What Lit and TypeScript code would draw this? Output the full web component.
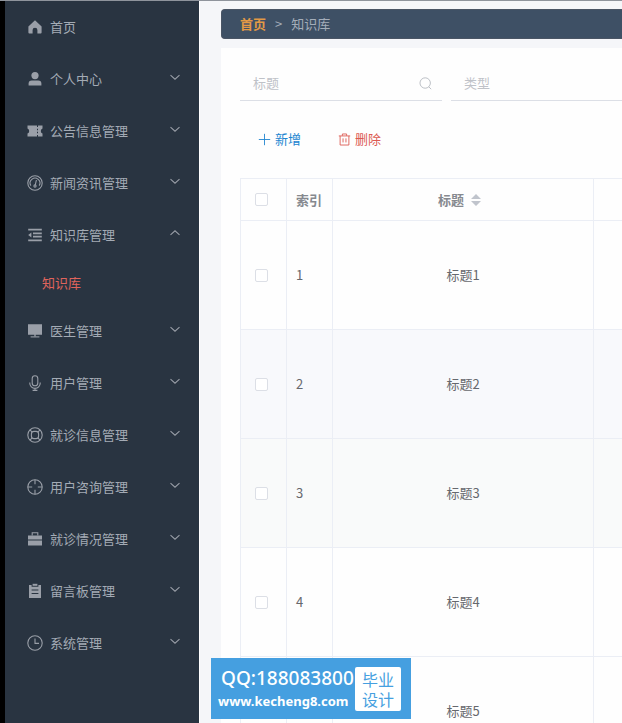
import { LitElement, html, css, svg } from "lit";
import { customElement, state } from "lit/decorators.js";

type Entry = { icon: string; label: string; children?: string[]; leaf?: boolean };

const menu: Entry[] = [
  { icon: "home", label: "首页", leaf: true },
  { icon: "user", label: "个人中心" },
  { icon: "ticket", label: "公告信息管理" },
  { icon: "gauge", label: "新闻资讯管理" },
  { icon: "fold", label: "知识库管理", children: ["知识库"] },
  { icon: "monitor", label: "医生管理" },
  { icon: "mic", label: "用户管理" },
  { icon: "help", label: "就诊信息管理" },
  { icon: "aim", label: "用户咨询管理" },
  { icon: "case", label: "就诊情况管理" },
  { icon: "order", label: "留言板管理" },
  { icon: "time", label: "系统管理" },
];

const icons: Record<string, unknown> = {
  home: svg`<path class="fill" d="M8 1.3 14.6 7.6V13.6Q14.6 14.6 13.6 14.6H10.4V11Q10.4 8.8 8 8.8T5.6 11V14.6H2.4Q1.4 14.6 1.4 13.6V7.6Z"/>`,
  user: svg`<circle class="fill" cx="8" cy="4.6" r="3.6"/><path class="fill" d="M1.6 14.6V12.6Q1.6 9.4 4.8 9.4H11.2Q14.4 9.4 14.4 12.6V14.6Z"/>`,
  ticket: svg`<path class="fill" d="M.5 2.6H10V4H11V2.6H15.5V5.4Q13.8 6 13.8 8T15.5 10.6V13.4H11V12H10V13.4H.5V10.6Q2.2 10 2.2 8T.5 5.4ZM10 5.8V7.3H11V5.8ZM10 8.8V10.3H11V8.8Z" fill-rule="evenodd"/>`,
  gauge: svg`<circle cx="8" cy="8" r="7.2"/><path d="M3.8 10.6A4.9 4.9 0 1 1 12.2 10.6M9.4 5 8.3 9.8"/><circle cx="8" cy="11" r="1.1"/>`,
  fold: svg`<path class="bold" d="M1.2 2.7H14.8M6 6.3H14.8M6 9.7H14.8M1.2 13.3H14.8"/><path class="fill" d="M1.2 8 4.4 5.6V10.4Z"/>`,
  monitor: svg`<path class="fill" d="M1 1.2H15V11.8H1ZM7.3 11.8H8.7V13.4H7.3Z"/><path d="M3.6 13.9H12.4"/>`,
  mic: svg`<rect x="5.2" y=".8" width="5.6" height="10" rx="2.8"/><path d="M2.8 7.4V8.2A5.2 5.2 0 0 0 13.2 8.2V7.4M8 13.4V15.4M5.6 15.4H10.4"/>`,
  help: svg`<circle cx="8" cy="8" r="7.2"/><rect x="4.4" y="4.4" width="7.2" height="7.2" rx="2.6"/><path d="M2.9 2.9 5.2 5.2M13.1 2.9 10.8 5.2M2.9 13.1 5.2 10.8M13.1 13.1 10.8 10.8"/>`,
  aim: svg`<circle cx="8" cy="8" r="7.2"/><path d="M8 .8V5.2M8 10.8V15.2M.8 8H5.2M10.8 8H15.2"/>`,
  case: svg`<path class="fill" d="M1 4.4H15V8.6H1ZM1 9.6H15V14.4H1Z"/><path d="M5.2 4.4V1.8H10.8V4.4"/>`,
  order: svg`<path class="fill" fill-rule="evenodd" d="M2 2H4.6V3.8H11.4V2H14V15H2ZM4.6 6.6V7.6H11.4V6.6ZM4.6 10V11H11.4V10Z"/><path class="fill" d="M5.6 .8H10.4V2.8H5.6Z"/>`,
  time: svg`<circle cx="8" cy="8" r="7.2"/><path d="M8 3.6V8.4H12"/>`,
  down: svg`<path d="M2 5.4 8 11 14 5.4"/>`,
  up: svg`<path d="M2 10.6 8 5 14 10.6"/>`,
  search: svg`<circle cx="7.6" cy="7.4" r="6.4"/><path d="M12 12 15 15"/>`,
  plus: svg`<path d="M8 1V15M1 8H15"/>`,
  trash: svg`<path d="M1 3.6H15M5.4 3.4V1.2H10.6V3.4M2.6 3.6V14.8H13.4V3.6M6.2 6.6V11.6M9.8 6.6V11.6"/>`,
};

const icon = (name: string, cls = "") =>
  html`<svg class="icon ${cls}" viewBox="0 0 16 16" aria-hidden="true">${icons[name]}</svg>`;

const base = css`
  * { box-sizing: border-box; }
  button, input { font: inherit; color: inherit; background: none; border: 0; margin: 0; padding: 0; }
  button { cursor: pointer; }
  a { color: inherit; text-decoration: none; }
  .icon { width: 16px; height: 16px; flex: none; fill: none; stroke: currentColor; stroke-width: 1.1; }
  .icon .fill { fill: currentColor; stroke: none; }
  .icon .bold { stroke-width: 1.8; }
`;

@customElement("side-menu")
export class SideMenu extends LitElement {
  @state() private open = "知识库管理";

  static styles = [base, css`
    :host { display: block; background: #293441; border-left: 5px solid #000; color: #a4abb5; }
    ul { list-style: none; margin: 0; padding: 0; }
    .row { display: flex; align-items: center; width: 100%; height: 52px; padding: 0 18px 0 22px; gap: 7px; text-align: left; }
    .row .icon { color: #9a9fa8; }
    .label { flex: 1; }
    .row .arrow { width: 12px; height: 12px; margin-bottom: 4px; stroke-width: 1.4; }
    .sub { display: flex; align-items: center; height: 44px; padding-left: 37px; color: #e0645c; }
  `];

  private toggle(label: string) {
    this.open = this.open === label ? "" : label;
  }

  render() {
    return html`<nav><ul>${menu.map((m) => {
      const open = this.open === m.label;
      return html`<li>
        ${m.leaf
          ? html`<a class="row" href="#">${icon(m.icon)}<span class="label">${m.label}</span></a>`
          : html`<button class="row" aria-expanded=${open} @click=${() => this.toggle(m.label)}>
              ${icon(m.icon)}<span class="label">${m.label}</span>${icon(open ? "up" : "down", "arrow")}
            </button>`}
        ${open && m.children ? m.children.map((c) => html`<a class="sub" href="#">${c}</a>`) : ""}
      </li>`;
    })}</ul></nav>`;
  }
}

@customElement("record-table")
export class RecordTable extends LitElement {
  private rows = [1, 2, 3, 4, 5];

  static styles = [base, css`
    :host { display: block; }
    table { width: 100%; table-layout: fixed; border-collapse: collapse; color: #66686d; }
    th, td { border: 1px solid #ebeef5; padding: 0 9px; font-weight: 400; }
    th:last-child, td:last-child { border-right: 0; }
    th { height: 42px; color: #86898f; font-weight: 700; text-align: left; }
    td { height: 109px; }
    .pick, .index { width: 46px; }
    .title { width: 261px; text-align: center; }
    .pick { padding: 0 14px; }
    .even td { background: #f8f9fc; }
    .third td { background: #f9fafa; }
    input { display: block; appearance: none; width: 13px; height: 13px; border: 1px solid #dcdfe6; border-radius: 2px; background: #fff; }
    input:checked { background: #409eff; }
    .sortable { display: inline-flex; align-items: center; }
    .sort { width: 24px; height: 14px; fill: #c0c4cc; }
  `];

  render() {
    return html`<table>
      <thead><tr>
        <th class="pick"><input type="checkbox" aria-label="全选" /></th>
        <th class="index">索引</th>
        <th class="title"><button class="sortable">标题<svg class="sort" viewBox="0 0 24 14" aria-hidden="true"><path d="M7 6 12 1 17 6ZM7 8H17L12 13Z"/></svg></button></th>
        <th></th>
      </tr></thead>
      <tbody>${this.rows.map((n) => html`<tr class=${n === 2 ? "even" : n === 3 ? "third" : ""}>
        <td class="pick"><input type="checkbox" aria-label="选择${n}" /></td>
        <td class="index">${n}</td>
        <td class="title">标题${n}</td>
        <td></td>
      </tr>`)}</tbody>
    </table>`;
  }
}

@customElement("app-root")
export class AppRoot extends LitElement {
  static styles = [base, css`
    :host {
      display: flex; position: relative; height: 100vh; overflow: hidden;
      border-top: 1px solid #8f949c; background: #f5f6f9;
      font: 13px/20px "Noto Sans CJK SC", sans-serif;
    }
    side-menu { flex: 0 0 199px; }
    main { flex: 1; min-width: 0; padding: 8px 0 0 21px; border-left: 1px solid #fff; }
    .crumbs { display: flex; align-items: center; gap: 9px; height: 30px; padding: 0 18px; border-radius: 4px 0 0 4px; background: #3e5065; color: #a4adb9; border: 1px solid #4a5565; border-right: 0; }
    .crumbs .home { color: #e39a45; font-weight: 700; }
    .card { margin-top: 9px; padding: 18px 0 0 19px; background: #fefefe; }
    .filters { display: flex; gap: 9px; }
    .field { flex: 0 0 202px; display: flex; align-items: center; height: 35px; padding: 0 10px 0 13px; border-bottom: 1px solid #dcdfe6; color: #b4b8bf; }
    .field input { flex: 1; min-width: 0; outline: none; }
    .field input::placeholder { color: #bfc2c8; opacity: 1; }
    .field .icon { width: 13px; height: 13px; }
    .actions { display: flex; gap: 37px; padding: 28px 18px 29px; }
    .actions button { display: flex; align-items: center; gap: 4px; }
    .actions .icon { width: 13px; height: 13px; }
    .add { color: #2185d0; }
    .remove { color: #dc5a52; }
    .badge {
      position: absolute; left: 211px; bottom: 5px; width: 200px; height: 61px; padding: 0 10px 0 7px;
      display: flex; align-items: center; justify-content: space-between;
      background: #459fe0; color: #fff; white-space: nowrap;
    }
    .contact { display: flex; flex-direction: column; font: 500 19px/24px "Noto Sans", sans-serif; }
    .qq { padding-left: 3px; }
    .site { font: 700 13px/22px "Noto Sans", sans-serif; }
    .tag { width: 46px; padding: 2px 0; border-radius: 2px; background: #fff; color: #459fe0; text-align: center; font-size: 16px; line-height: 20px; }
  `];

  render() {
    return html`
      <side-menu></side-menu>
      <main>
        <nav class="crumbs"><a class="home" href="#">首页</a><span>&gt;</span><span>知识库</span></nav>
        <section class="card">
          <div class="filters">
            <label class="field"><input type="text" placeholder="标题" aria-label="标题" />${icon("search")}</label>
            <label class="field"><input type="text" placeholder="类型" aria-label="类型" />${icon("search")}</label>
          </div>
          <div class="actions">
            <button class="add">${icon("plus")}新增</button>
            <button class="remove">${icon("trash")}删除</button>
          </div>
          <record-table></record-table>
        </section>
      </main>
      <aside class="badge">
        <div class="contact"><span class="qq">QQ:188083800</span><a class="site" href="#">www.kecheng8.com</a></div>
        <div class="tag">毕业<br />设计</div>
      </aside>`;
  }
}
